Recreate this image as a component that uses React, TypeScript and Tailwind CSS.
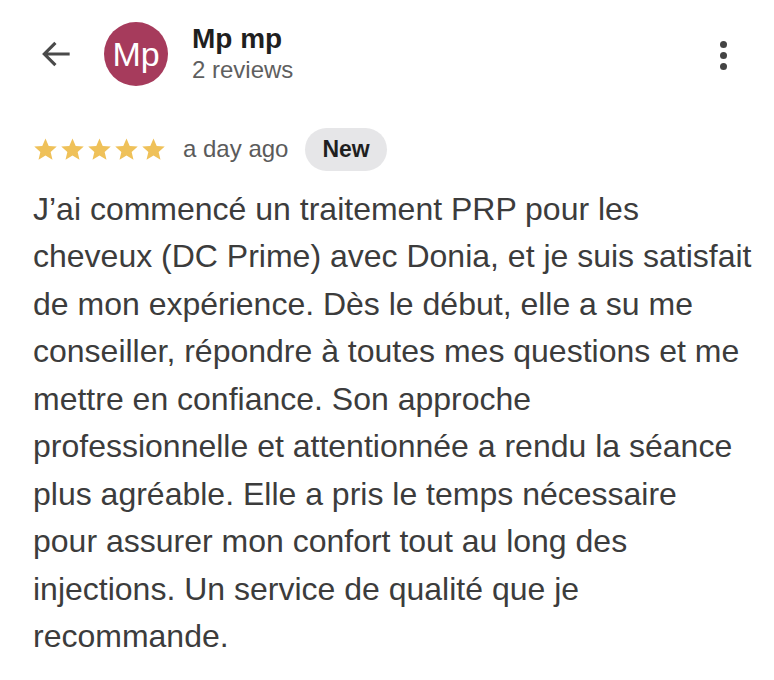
import React from 'react';

const Star = () => (
  <svg viewBox="0 0 24 24" className="h-[27px] w-[27px]" fill="#efc159">
    <path d="M12 2.2l2.85 6.6 7.15.62-5.42 4.7 1.62 7.02L12 17.4l-6.2 3.74 1.62-7.02L2 9.42l7.15-.62z" />
  </svg>
);

export default function App() {
  const reviewStart =
    "J’ai commencé un traitement PRP pour les cheveux (DC Prime) avec Donia, et je suis satisfait de mon expérience. Dès le début, elle a su me conseiller, répondre à toutes mes questions et me mettre en confiance. Son approche professionnelle et attentionnée a rendu la séance plus agréable. Elle a pris le temps nécessaire";
  const reviewEnd =
    "pour assurer mon confort tout au long des injections. Un service de qualité que je recommande.";

  return (
    <div className="min-h-screen bg-white font-['Liberation_Sans',Arial,sans-serif]">
      {/* Header */}
      <div className="flex items-center pl-[38px] pr-[47px] pt-[22px]">
        <svg viewBox="0 0 24 24" className="h-[38px] w-[38px]" fill="none" stroke="#4a4a4a" strokeWidth="2">
          <path d="M20 12H4.5M11 5l-7 7 7 7" />
        </svg>
        <div className="ml-[28px] flex h-[64px] w-[64px] items-center justify-center rounded-full bg-[#a63b5c] text-[34px] text-white">
          Mp
        </div>
        <div className="ml-[24px] flex flex-col">
          <span className="text-[28px] font-bold leading-[32px] text-[#1f1f1f]">Mp mp</span>
          <span className="text-[24px] leading-[30px] text-[#5f5f5f]">2 reviews</span>
        </div>
        <div className="ml-auto flex flex-col items-center gap-[4px] self-start pt-[19px]">
          <span className="h-[7px] w-[7px] rounded-full bg-[#444]" />
          <span className="h-[7px] w-[7px] rounded-full bg-[#444]" />
          <span className="h-[7px] w-[7px] rounded-full bg-[#444]" />
        </div>
      </div>

      {/* Rating row */}
      <div className="mt-[42px] flex items-center pl-[32px]">
        <div className="flex">
          <Star />
          <Star />
          <Star />
          <Star />
          <Star />
        </div>
        <span className="ml-[16px] text-[24px] text-[#5b5b5b]">a day ago</span>
        <span className="ml-[17px] rounded-full bg-[#e6e6e8] px-[17px] py-[4px] text-[23px] font-bold text-[#1f1f1f]">
          New
        </span>
      </div>

      {/* Body */}
      <p className="mt-[15px] pl-[33px] pr-[21px] text-[32px] leading-[47.5px] text-[#3c3c3c]">
        {reviewStart}
        <br />
        {reviewEnd}
      </p>
    </div>
  );
}
